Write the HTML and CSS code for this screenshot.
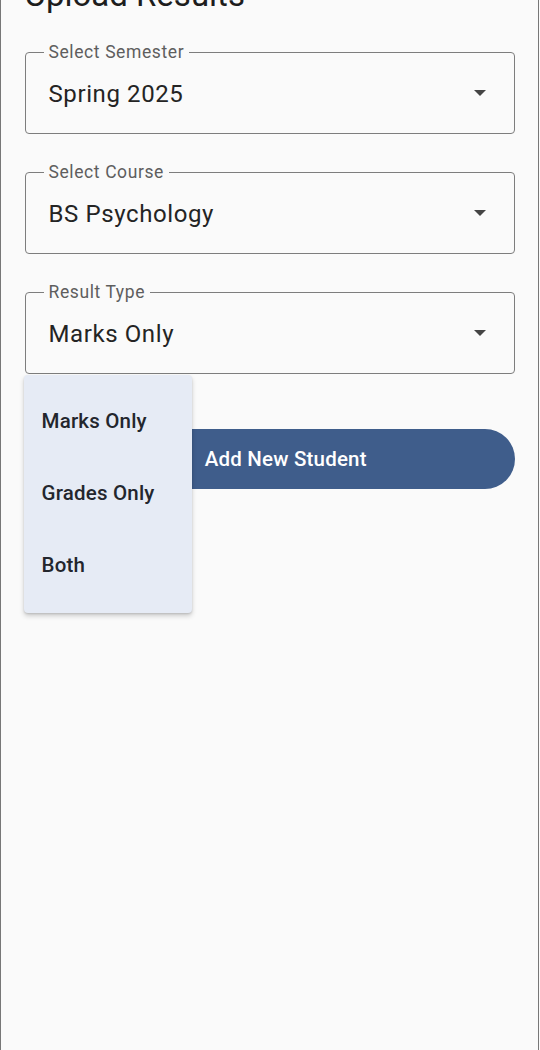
FILE: index.html
```html
<!DOCTYPE html>
<html lang="en">
<head>
  <meta charset="UTF-8" />
  <meta name="viewport" content="width=device-width, initial-scale=1.0" />
  <title>Upload Results</title>
  <link rel="stylesheet" href="styles.css">
</head>
<body>
  <div class="screen">
    <h1 class="title">Upload Results</h1>

    <div class="field">
      <span class="label">Select Semester</span>
      <span class="value">Spring 2025</span>
      <span class="arrow"></span>
    </div>

    <div class="field">
      <span class="label">Select Course</span>
      <span class="value">BS Psychology</span>
      <span class="arrow"></span>
    </div>

    <div class="field open">
      <span class="label">Result Type</span>
      <span class="value">Marks Only</span>
      <span class="arrow"></span>
      <ul class="menu">
        <li>Marks Only</li>
        <li>Grades Only</li>
        <li>Both</li>
      </ul>
    </div>

    <button class="add-btn">
      <svg width="20" height="20" viewBox="0 0 24 24"><path d="M19 13h-6v6h-2v-6H5v-2h6V5h2v6h6v2z" fill="#fff"/></svg>
      <span>Add New Student</span>
    </button>
  </div>
</body>
</html>
```

FILE: styles.css
```css
:root {
  --bg: #fafafa;
  --line: #7d7d7d;
  --label: #5e5e5e;
  --text: #242424;
  --primary: #3f5d8b;
  --menu: #e6ebf5;
}
* {
  box-sizing: border-box;
  font-family: Roboto, "Noto Sans", sans-serif;
}
html, body {
  margin: 0;
  height: 100%;
  overflow: hidden;
}
body {
  background: var(--bg);
}
.screen {
  height: 100%;
  border-left: 1.5px solid #777;
  border-right: 1.5px solid #777;
  margin-right: 1px;
  padding: 0 23px 0 23.5px;
  display: flex;
  flex-direction: column;
}
.title {
  margin: -23px 0 39px;
  font-size: 33px;
  line-height: 36px;
  font-weight: 400;
  color: #1d1d1d;
}
.field {
  position: relative;
  height: 82px;
  border: 1.5px solid var(--line);
  border-radius: 4px;
  display: flex;
  align-items: center;
  padding: 0 28px 0 23px;
  margin-bottom: 38px;
}
.label {
  position: absolute;
  top: -12px;
  left: 18px;
  padding: 0 5px;
  background: var(--bg);
  font-size: 17.5px;
  line-height: 22px;
  letter-spacing: 0.6px;
  color: var(--label);
}
.value {
  flex: 1;
  font-size: 24px;
  color: var(--text);
  letter-spacing: 0.6px;
  padding-top: 1px;
}
.arrow {
  width: 0;
  height: 0;
  border-left: 6px solid transparent;
  border-right: 6px solid transparent;
  border-top: 6px solid #444;
}
.open {
  margin-bottom: 55px;
}
.menu {
  position: absolute;
  top: calc(100% + 2px);
  left: -2px;
  width: 168px;
  height: 238px;
  margin: 0;
  padding: 10px 0;
  list-style: none;
  background: var(--menu);
  border-radius: 4px;
  box-shadow: 0 3px 5px rgba(0, 0, 0, 0.18), 0 1px 2px rgba(0, 0, 0, 0.12);
  z-index: 2;
}
.menu li {
  height: 72px;
  display: flex;
  align-items: center;
  padding-left: 18px;
  font-size: 20.5px;
  font-weight: 500;
  letter-spacing: 0.2px;
  color: #23262d;
}
.add-btn {
  height: 60px;
  border: none;
  border-radius: 30px;
  background: var(--primary);
  color: #fff;
  display: flex;
  align-items: center;
  justify-content: center;
  gap: 12px;
  font-size: 20.5px;
  font-weight: 500;
  letter-spacing: 0.2px;
  padding: 0;
}
```
